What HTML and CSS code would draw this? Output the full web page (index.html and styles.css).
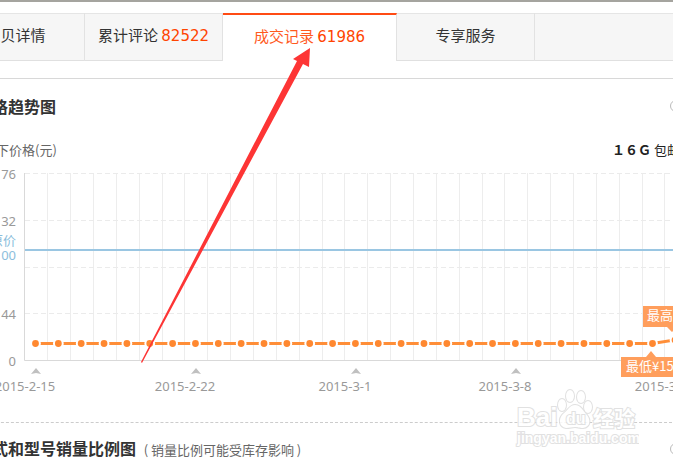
FILE: index.html
```html
<!DOCTYPE html>
<html lang="zh-CN">
<head>
  <meta charset="UTF-8">
  <meta name="viewport" content="width=device-width, initial-scale=1.0">
  <title>成交记录</title>
  <link rel="stylesheet" href="styles.css">
</head>
<body>
  <div class="page">
    <nav class="tabs">
      <a class="tab" href="#detail">宝贝详情</a>
      <a class="tab" href="#reviews">累计评论 <span class="count">82522</span></a>
      <a class="tab active" href="#records">成交记录 <span class="count">61986</span></a>
      <a class="tab" href="#service">专享服务</a>
    </nav>

    <main class="content">
      <section>
        <header class="section-head">
          <h2>价格趋势图</h2>
          <a class="help" href="#help">?</a>
        </header>
        <div class="legend">
          <span>线下价格(元)</span>
          <span class="sku"><b>１６Ｇ</b> 包邮</span>
        </div>
        <div class="chart">
          <svg width="1600" height="236" viewBox="-24 164 1600 236">
            <g id="grid"></g>
            <path class="axis" d="M24.5 173V360.5H1600"/>
            <path class="origin-line" d="M25 250H1600"/>
            <g class="labels" text-anchor="end">
              <text x="16" y="179">76</text>
              <text x="16" y="226">32</text>
              <text class="origin" x="16" y="245">原价</text>
              <text class="origin" x="16" y="260">00</text>
              <text x="16" y="319">44</text>
              <text x="16" y="366">0</text>
            </g>
            <g id="series"></g>
            <g id="dates" class="labels" text-anchor="middle"></g>
            <path class="tag" d="M643 306H720V327H677L672 332L667 327H643Z"/>
            <text class="tag-text" x="647" y="320">最高</text>
            <path class="tag" d="M621 357H646L651 351L656 357H720V377H621Z"/>
            <text class="tag-text" x="626" y="371">最低¥15</text>
          </svg>
        </div>
      </section>

      <section class="ratio">
        <header class="section-head">
          <h2>款式和型号销量比例图 <small>( 销量比例可能受库存影响 )</small></h2>
          <a class="help" href="#help">?</a>
        </header>
      </section>
    </main>
  </div>

  <svg class="arrow" width="320" height="370" viewBox="0 0 320 370">
    <path d="M310 48L309 67L303 64L142 363L141 362L297 61L293 59Z"/>
  </svg>

  <svg class="watermark" width="124" height="62" viewBox="0 0 124 62">
    <text class="wm-big" x="2" y="39">Bai</text>
    <g class="wm-paw">
      <ellipse cx="47" cy="18" rx="4" ry="6"/>
      <ellipse cx="55" cy="9" rx="4" ry="6"/>
      <ellipse cx="66" cy="10" rx="4" ry="6"/>
      <ellipse cx="73" cy="20" rx="4" ry="6"/>
      <path d="M60 18C65 18 67 22 71 27C76 32 76 40 68 41C64 41 63 40 60 40C57 40 55 41 51 41C44 40 43 32 48 27C53 23 55 18 60 18Z"/>
    </g>
    <text class="wm-du" x="51" y="37">du</text>
    <text class="wm-cn" x="78" y="39">经验</text>
    <text class="wm-url" x="2" y="56">jingyan.baidu.com</text>
  </svg>

<script>
  const svgNS = 'http://www.w3.org/2000/svg';
  const step = 617 / 27;

  function add(parent, tag, attrs, text) {
    const el = document.createElementNS(svgNS, tag);
    for (const key in attrs) el.setAttribute(key, attrs[key]);
    if (text) el.textContent = text;
    document.getElementById(parent).appendChild(el);
  }

  // Grid lines
  for (let i = 1; i < 68; i++) {
    const x = Math.round(24.5 + i * step);
    add('grid', 'path', { class: 'grid-v', d: `M${x + 0.5} 173V360` });
  }
  [173, 220, 267, 313].forEach(y => {
    add('grid', 'path', { class: 'grid-h', d: `M25 ${y + 0.5}H1600` });
  });

  // Price line: one dash between each pair of days, with a dot for each day
  const points = [];
  for (let i = 0; i < 28; i++) points.push([35.5 + i * step, 343.5]);
  points.push([675, 340]);
  add('series', 'polyline', { class: 'price-line', points: points.join(' ') });
  points.forEach(([x, y]) => add('series', 'circle', { class: 'dot', cx: x, cy: y, r: 4.4 }));

  // Week labels
  ['2015-2-15', '2015-2-22', '2015-3-1', '2015-3-8', '2015-3-15'].forEach((date, i) => {
    const x = 36 + i * 160;
    if (i < 4) add('dates', 'path', { class: 'caret', d: `M${x} 368L${x + 5} 374L${x} 373L${x - 5} 374Z` });
    add('dates', 'text', { x: x - 11, y: 391 }, date);
  });
</script>
</body>
</html>
```

FILE: styles.css
```css
body {
  margin: 0;
  position: relative;
  overflow: hidden;
  background: #fff;
  color: #333;
  font-family: "Noto Sans", "Noto Sans CJK SC", sans-serif;
  font-size: 13px;
  border-top: 2px solid #a5a49f;
}
a {
  color: inherit;
  text-decoration: none;
}
.page {
  margin: 0 -9px 0 -24px;
  padding-top: 11px;
}

/* Tabs */
.tabs {
  display: flex;
  height: 48px;
  margin-left: -29px;
  background: #f6f6f6;
  box-shadow: inset 0 1px #e5e5e5, inset 0 -1px #e0e0e0;
}
.tab {
  box-sizing: border-box;
  flex: none;
  width: 138px;
  border-right: 1px solid #e2e2e2;
  font-family: "Noto Sans CJK SC", sans-serif;
  font-size: 15px;
  line-height: 44px;
  text-align: center;
  white-space: nowrap;
}
.tab.active {
  width: 174px;
  background: #fff;
  border-top: 2px solid #ff4b14;
  color: #ff5a1e;
  line-height: 42px;
}
.count {
  color: #ff4400;
  font-family: "DejaVu Sans", sans-serif;
}

/* Sections */
.content {
  margin-top: 17px;
  border-top: 1px solid #d8d8d8;
}
.section-head {
  display: flex;
  justify-content: space-between;
  align-items: center;
  height: 53px;
}
h2 {
  margin: 0;
  font-family: "Noto Sans CJK SC", sans-serif;
  font-size: 16px;
  line-height: 24px;
}
h2 small {
  margin-left: 4px;
  color: #666;
  font-size: 13px;
  font-weight: normal;
}
.help {
  box-sizing: border-box;
  width: 12px;
  height: 12px;
  border: 1px solid #bbb;
  border-radius: 50%;
  color: #999;
  font-size: 9px;
  line-height: 10px;
  text-align: center;
}
.legend {
  display: flex;
  justify-content: space-between;
  padding: 6px 2px 2px 7px;
  color: #666;
  font-family: "Noto Sans CJK SC", sans-serif;
  line-height: 24px;
}
.sku {
  color: #222;
}

/* Price chart */
.chart {
  overflow: hidden;
  border-bottom: 1px dashed #ccc;
  height: 258px;
}
.chart svg {
  display: block;
}
.axis {
  fill: none;
  stroke: #d9d9d9;
}
.grid-v {
  stroke: #ededed;
}
.grid-h {
  stroke: #ebebeb;
  stroke-dasharray: 5 3;
}
.origin-line {
  stroke: #9ac6e2;
  stroke-width: 2;
}
.labels {
  fill: #999;
}
.origin {
  fill: #8cbedc;
}
.price-line {
  fill: none;
  stroke: #ff8e38;
  stroke-width: 3;
}
.dot {
  fill: #ff8830;
  stroke: #fff;
  stroke-width: 2;
}
.caret {
  fill: #c0c0c0;
}
.tag {
  fill: #ff9e5c;
}
.tag-text {
  fill: #fff;
  font-family: "Noto Sans CJK SC", sans-serif;
}

.ratio .section-head {
  height: 52px;
}

/* Overlays */
.arrow {
  position: absolute;
  top: -2px;
  left: 0;
  fill: #fd3535;
  pointer-events: none;
}
.watermark {
  position: absolute;
  top: 385px;
  right: 34px;
  fill: #fff;
  stroke: #dcdcdc;
  stroke-width: 2;
  opacity: 0.85;
  paint-order: stroke;
  font-family: "Liberation Sans", "Noto Sans CJK SC", sans-serif;
  font-weight: bold;
  pointer-events: none;
}
.wm-big {
  font-size: 26px;
}
.wm-du {
  font-size: 16px;
}
.wm-cn {
  font-size: 21px;
}
.wm-url {
  font-size: 14px;
}
```
